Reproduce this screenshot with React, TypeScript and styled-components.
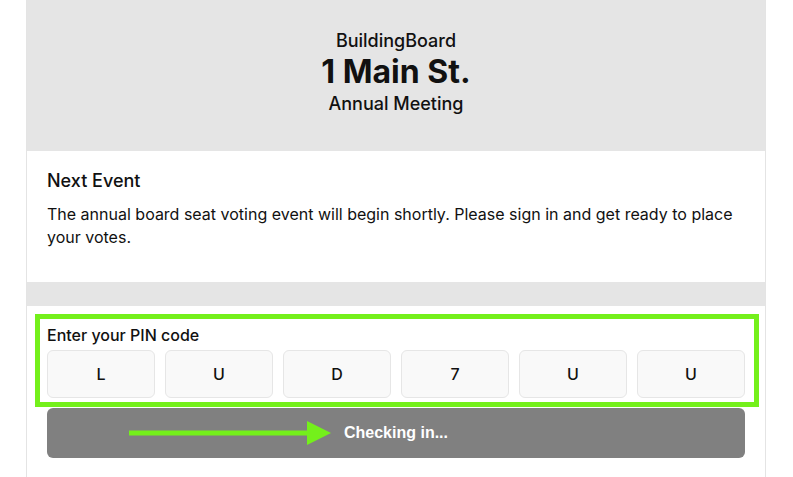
import React from 'react';
import styled, {createGlobalStyle} from 'styled-components';

const GlobalStyle = createGlobalStyle`
  body {
    margin: 0;
    background: #FFFFFF;
    font-family: Inter, "Noto Sans", sans-serif;
    color: #111111;
  }
`;

const pin = ['L', 'U', 'D', '7', 'U', 'U'];

const App = () => {
  return (
    <>
      <GlobalStyle />
      <Page>
        <Header>
          <Org>BuildingBoard</Org>
          <Address>1 Main St.</Address>
          <Meeting>Annual Meeting</Meeting>
        </Header>
        <EventSection>
          <SectionTitle>Next Event</SectionTitle>
          <EventText>
            The annual board seat voting event will begin shortly. Please sign in and get ready to place
            your votes.
          </EventText>
        </EventSection>
        <Divider />
        <SignInSection>
          <PinGroup>
            <PinLabel>Enter your PIN code</PinLabel>
            <PinRow>
              {pin.map((char, i) => <PinBox key={i}>{char}</PinBox>)}
            </PinRow>
            <Highlight />
          </PinGroup>
          <CheckInButton>
            <Arrow width="202" height="24" viewBox="0 0 202 24">
              <rect x="0" y="9.5" width="180" height="5" fill="#74F01B" />
              <polygon points="178,0 202,12 178,24" fill="#74F01B" />
            </Arrow>
            Checking in...
          </CheckInButton>
        </SignInSection>
      </Page>
    </>
  );
};

export default App;

const Page = styled.div`
  width: 738px;
  margin: 0 0 0 26px;
  min-height: 477px;
  border-left: 1px solid #E4E4E4;
  border-right: 1px solid #E4E4E4;
`;

const Header = styled.header`
  height: 151px;
  box-sizing: border-box;
  padding-top: 30px;
  background: #E5E5E5;
  display: flex;
  flex-direction: column;
  align-items: center;
`;

const Org = styled.div`
  font-size: 18px;
  font-weight: 500;
  line-height: 22px;
`;

const Address = styled.h1`
  margin: 0;
  font-size: 32px;
  font-weight: 700;
  line-height: 40px;
`;

const Meeting = styled.div`
  font-size: 18px;
  font-weight: 500;
  line-height: 24px;
`;

const EventSection = styled.section`
  height: 131px;
  box-sizing: border-box;
  padding: 18px 20px 0;
`;

const SectionTitle = styled.h2`
  margin: 0 0 10px;
  font-size: 18px;
  font-weight: 500;
  line-height: 24px;
`;

const EventText = styled.p`
  margin: 0;
  font-size: 16px;
  line-height: 23px;
`;

const Divider = styled.div`
  height: 24px;
  background: #E5E5E5;
`;

const SignInSection = styled.section`
  padding: 19px 20px 19px;
  display: flex;
  flex-direction: column;
  gap: 10px;
`;

const PinGroup = styled.div`
  position: relative;
  display: flex;
  flex-direction: column;
  gap: 5px;
`;

const PinLabel = styled.label`
  font-size: 16px;
  font-weight: 500;
  line-height: 20px;
`;

const PinRow = styled.div`
  display: grid;
  grid-template-columns: repeat(6, 1fr);
  gap: 10px;
`;

const PinBox = styled.div`
  height: 48px;
  box-sizing: border-box;
  display: flex;
  align-items: center;
  justify-content: center;
  background: #F9F9F9;
  border: 1px solid #E6E6E6;
  border-radius: 6px;
  font-size: 16px;
  font-weight: 500;
`;

const Highlight = styled.div`
  position: absolute;
  top: -11px;
  left: -12px;
  right: -14px;
  bottom: -9px;
  border: 5px solid #74F01B;
  pointer-events: none;
`;

const CheckInButton = styled.button`
  position: relative;
  height: 50px;
  border: none;
  border-radius: 6px;
  background: #808080;
  color: #FFFFFF;
  font-family: "Liberation Sans", Arial, sans-serif;
  font-size: 16px;
  font-weight: 700;
`;

const Arrow = styled.svg`
  position: absolute;
  left: 82px;
  top: 13px;
`;
